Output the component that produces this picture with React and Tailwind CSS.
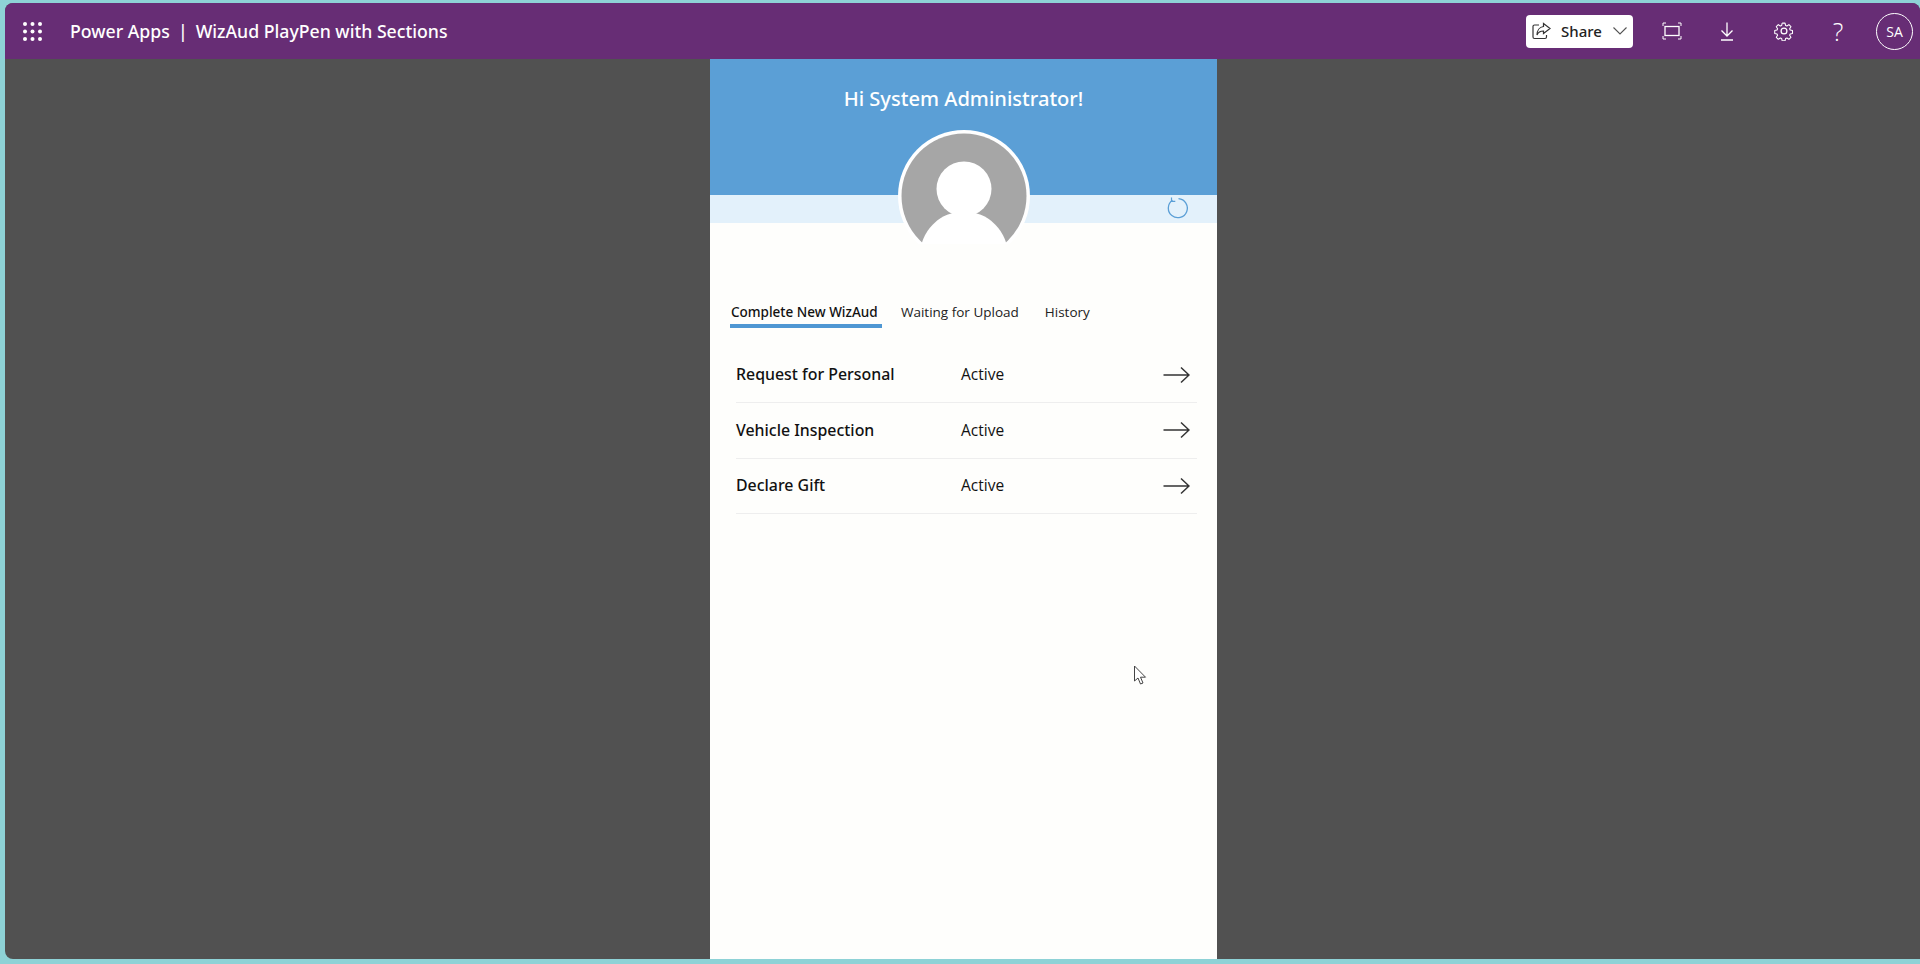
const rows = ['Request for Personal', 'Vehicle Inspection', 'Declare Gift'];

function Waffle() {
  const dots = [];
  for (let y = 0; y < 3; y++) {
    for (let x = 0; x < 3; x++) {
      dots.push(<circle key={`${x}-${y}`} cx={2 + x * 7.5} cy={2 + y * 7.5} r="2" fill="white" />);
    }
  }
  return (
    <svg width="19" height="19" viewBox="0 0 19 19">
      {dots}
    </svg>
  );
}

function ShareIcon() {
  return (
    <svg width="20" height="18" viewBox="0 0 20 18" fill="none" stroke="#333" strokeWidth="1.2">
      <path d="M7 3H2.500a1.500 1.500 0 0 0-1.500 1.500V15a1.500 1.500 0 0 0 1.500 1.500H13a1.500 1.500 0 0 0 1.500-1.500v-2" />
      <path d="M11.500 1.500L18 6.500l-6.500 5V9C8 9 6 10.500 5 13c0-4.500 2.500-8 6.500-8.500z" />
    </svg>
  );
}

function FitIcon() {
  return (
    <svg width="20" height="18" viewBox="0 0 20 18" fill="none" stroke="white" strokeWidth="1.3">
      <rect x="3" y="4.500" width="14" height="9" />
      <path d="M1 4V1h3M16 1h3v3M1 14v3h3M16 17h3v-3" strokeWidth="1" />
    </svg>
  );
}

function DownloadIcon() {
  return (
    <svg width="14" height="19" viewBox="0 0 14 19" fill="none" stroke="white" strokeWidth="1.3">
      <path d="M7 0.500V14M1.500 8.500L7 14l5.500-5.500M1 18h12" />
    </svg>
  );
}

function GearIcon() {
  return (
    <svg width="20" height="20" viewBox="0 0 24 24" fill="none" stroke="white" strokeWidth="1.500" strokeLinejoin="round">
      <path d="M10 1.500h4l.7 3.200 1.900.8 2.800-1.800 2.800 2.800-1.800 2.800.8 1.900 3.200.7v4l-3.200.7-.8 1.900 1.800 2.800-2.800 2.800-2.800-1.800-1.900.8-.7 3.200h-4" transform="translate(-0.500 -0.500) scale(0.86) translate(2 2)" />
      <path d="M10 1.500l-.7 3.200-1.900.8-2.800-1.800-2.800 2.800 1.800 2.800-.8 1.900-3.200.7v4l3.200.7.8 1.900-1.800 2.800 2.800 2.800 2.800-1.800 1.900.8.700 3.200" transform="translate(-0.500 -0.500) scale(0.86) translate(2 2)" />
      <circle cx="12" cy="12" r="3.500" />
    </svg>
  );
}

function Avatar() {
  return (
    <svg width="134" height="116" viewBox="0 0 134 116" className="block">
      <defs>
        <clipPath id="avatarClip">
          <rect x="0" y="0" width="134" height="115" />
        </clipPath>
      </defs>
      <g clipPath="url(#avatarClip)">
        <circle cx="67" cy="67" r="66" fill="white" />
        <circle cx="67" cy="67" r="62.500" fill="#a6a6a6" />
        <circle cx="67" cy="60" r="27.500" fill="white" />
        <circle cx="67" cy="126.500" r="44" fill="white" />
      </g>
    </svg>
  );
}

function Arrow() {
  return (
    <svg width="27" height="18" viewBox="0 0 27 18" fill="none" stroke="#333" strokeWidth="1.500">
      <path d="M0.500 9H26M18 1.500L26 9l-8 7.500" />
    </svg>
  );
}

function RefreshIcon() {
  return (
    <svg width="22" height="22" viewBox="0 0 22 22" fill="none" stroke="#5b9fd6" strokeWidth="1.300">
      <path d="M6.500 3.300a9.500 9.500 0 1 0 6-1.600" />
      <path d="M5.500 0.500v3.800h3.800" strokeWidth="1.200" />
    </svg>
  );
}

function Cursor() {
  return (
    <svg width="15" height="21" viewBox="0 0 15 21" fill="white" stroke="#444" strokeWidth="1">
      <path d="M1.500 1v15l3.500-3 2.500 6 2.500-1-2.500-5.800h5z" />
    </svg>
  );
}

export default function App() {
  return (
    <div className="h-[964px] w-full overflow-hidden bg-[#8ed2d6] pt-[3px] pl-[5px] pb-[5px] font-['Open_Sans','Noto_Sans',sans-serif]">
      <div className="flex h-full flex-col overflow-hidden rounded-l-lg rounded-tr-lg bg-[#515151]">
        {/* Header */}
        <header className="flex h-[56px] shrink-0 items-center bg-[#672d75] text-white">
          <div className="ml-[18px] flex w-[47px] items-center">
            <Waffle />
          </div>
          <div className="flex items-center pt-[2px] font-['Noto_Sans',sans-serif] text-[17.700px] leading-none font-medium">
            <span>Power Apps</span>
            <span className="mx-[8px]">|</span>
            <span>WizAud PlayPen with Sections</span>
          </div>
          <div className="ml-auto flex items-center">
            <button className="flex h-[33px] w-[107px] items-center rounded-[4px] bg-white pl-[6px] font-['Noto_Sans',sans-serif] text-[15px] font-medium text-[#222]">
              <ShareIcon />
              <span className="ml-[9px]">Share</span>
              <svg className="ml-[11px]" width="14" height="8" viewBox="0 0 14 8" fill="none" stroke="#555" strokeWidth="1.100">
                <path d="M0.500 0.500L7 7l6.500-6.500" />
              </svg>
            </button>
            <div className="ml-[29px] flex items-center">
              <FitIcon />
            </div>
            <div className="ml-[38px] flex items-center">
              <DownloadIcon />
            </div>
            <div className="ml-[40px] flex items-center">
              <GearIcon />
            </div>
            <span className="ml-[38px] w-[12px] text-center text-[25px] leading-none font-light">?</span>
            <div className="mr-[7px] ml-[32px] flex h-[37px] w-[37px] items-center justify-center rounded-full border border-white text-[14px]">
              SA
            </div>
          </div>
        </header>

        {/* Canvas */}
        <main className="flex min-h-0 flex-1 pl-[705px]">
          <div className="relative flex h-full w-[507px] flex-col bg-[#fefefc]">
            <div className="h-[136px] bg-[#5b9fd6] pt-[26px] text-center font-['Noto_Sans',sans-serif] text-[20.100px] leading-[28px] font-medium text-white">
              Hi System Administrator!
            </div>
            <div className="flex h-[28px] items-center justify-end bg-[#e3f1fb] pr-[29px] pb-[3px]">
              <RefreshIcon />
            </div>
            <div className="absolute top-[70px] left-[187px]">
              <Avatar />
            </div>

            {/* Tabs */}
            <div className="mt-[80px] flex pl-[20px] text-[13.500px] leading-[18px] text-[#222]">
              <div className="w-[152px] border-b-4 border-[#4f97d3] pb-[3px] pl-[1px] font-['Noto_Sans',sans-serif] font-medium whitespace-nowrap text-[#111]">Complete New WizAud</div>
              <div className="ml-[19px]">Waiting for Upload</div>
              <div className="ml-[26px]">History</div>
            </div>

            {/* Rows */}
            <div className="mt-[19.500px] ml-[26px] w-[461px]">
              {rows.map((row) => (
                <div key={row} className="flex h-[55.500px] items-center border-b border-[#eeeeee] text-[15.500px] text-[#111]">
                  <span className="w-[225px] pt-[1px] font-['Noto_Sans',sans-serif] text-[15.900px] font-medium">{row}</span>
                  <span>Active</span>
                  <span className="mr-[7px] ml-auto flex">
                    <Arrow />
                  </span>
                </div>
              ))}
            </div>
            <div className="absolute top-[606px] left-[423px]">
              <Cursor />
            </div>
          </div>
        </main>
      </div>
    </div>
  );
}
